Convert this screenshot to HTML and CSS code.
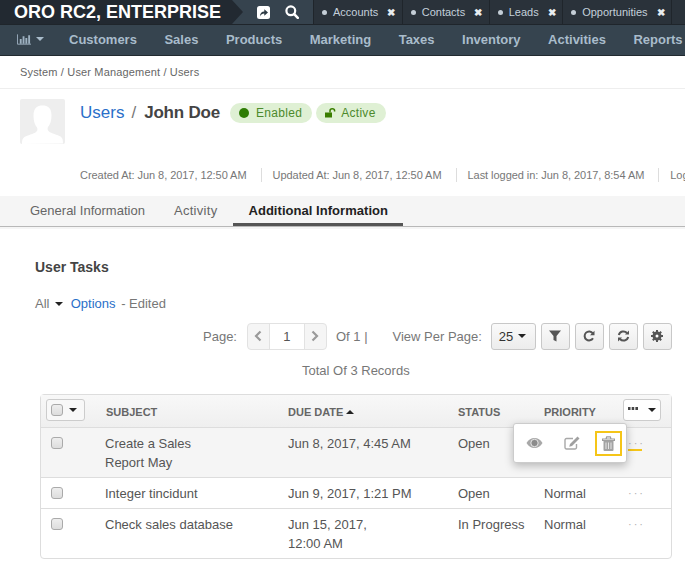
FILE: index.html
```html
<!DOCTYPE html>
<html lang="en">
<head>
<meta charset="utf-8">
<title>Users - John Doe</title>
<link rel="stylesheet" href="styles.css">
</head>
<body>
<div class="page">
  <header class="topbar">
    <div class="brand">ORO RC2, ENTERPRISE</div>
    <div class="top-actions">
      <svg viewBox="0 0 13 13" width="13" height="13"><rect width="13" height="13" rx="2.500" fill="#fff"/><path d="M3 10.500c0-3.500 1.800-5 4.300-5V3.200L11 6.400 7.300 9.800V7.500c-1.900 0-3.200.8-4.300 3z" fill="#2d3a44"/></svg>
      <svg viewBox="0 0 14 14" width="14" height="14"><circle cx="5.800" cy="5.800" r="4.400" fill="none" stroke="#fff" stroke-width="2.200"/><path d="M9.200 9.200l3.600 3.600" stroke="#fff" stroke-width="2.600" stroke-linecap="round"/></svg>
    </div>
    <div class="pin"><i></i><span>Accounts</span><b>✖</b></div>
    <div class="pin"><i></i><span>Contacts</span><b>✖</b></div>
    <div class="pin"><i></i><span>Leads</span><b>✖</b></div>
    <div class="pin"><i></i><span>Opportunities</span><b>✖</b></div>
  </header>
  <nav class="mainnav">
    <div class="nav-chart">
      <svg viewBox="0 0 15 11" width="15" height="11"><path d="M0.500 0v10.500H15" fill="none" stroke="#9fb2c2" stroke-width="1"/><path d="M3 5h2v5H3zM6 2h2v8H6zM9 4h2v6H9zM12 1h2v9h-2z" fill="#9fb2c2"/></svg>
      <span class="caret light"></span>
    </div>
    <a>Customers</a><a>Sales</a><a>Products</a><a>Marketing</a><a>Taxes</a><a>Inventory</a><a>Activities</a><a>Reports</a>
  </nav>
  <div class="crumbs">System / User Management / Users</div>
  <section class="head">
    <div class="avatar">
      <svg viewBox="0 0 45 45" width="45" height="45"><rect width="45" height="45" rx="2" fill="#eeeeee"/><path d="M2 45c0-4 .5-6 3.500-7.500 4-2 10-3 11.500-5.500.5-1 .5-2.500 0-3.500-2-2.500-3.500-6-3.500-11.500C13.500 9 17 6.500 22.500 6.500S31.500 9 31.500 16.500c0 5.500-1.500 9-3.500 11.500-.5 1-.5 2.500 0 3.500 1.500 2.500 7.500 3.500 11.500 5.500 3 1.500 3.500 3.500 3.500 7.500z" fill="#fff"/></svg>
    </div>
    <div class="title">
      <a class="t-link">Users</a><span class="t-sep">/</span><strong>John Doe</strong>
      <span class="pill enabled"><i></i>Enabled</span>
      <span class="pill active">
        <svg viewBox="0 0 13 10" width="13" height="10"><path d="M1 4.500h7v5H1z" fill="#3a7d00"/><path d="M6 4.500V2.800C6 1.500 7 .8 8.300.8s2.300.8 2.300 2v.8" fill="none" stroke="#3a7d00" stroke-width="1.500"/></svg>Active</span>
    </div>
  </section>
  <div class="meta">
    <span>Created At: Jun 8, 2017, 12:50 AM</span>
    <span>Updated At: Jun 8, 2017, 12:50 AM</span>
    <span>Last logged in: Jun 8, 2017, 8:54 AM</span>
    <span>Login Count: 2</span>
  </div>
  <div class="tabs">
    <a>General Information</a><a class="mid">Activity</a><a class="on">Additional Information</a>
  </div>
  <h2 class="sect">User Tasks</h2>
  <div class="views">All <span class="caret"></span> <a>Options</a> <span class="edited">- Edited</span></div>
  <div class="toolbar">
    <span class="lbl">Page:</span>
    <div class="pager">
      <span class="pg-btn"><svg viewBox="0 0 8 12" width="8" height="12"><path d="M6.500 1.500L2 6l4.500 4.500" fill="none" stroke="#9a9a9a" stroke-width="2.200"/></svg></span>
      <span class="pg-num">1</span>
      <span class="pg-btn"><svg viewBox="0 0 8 12" width="8" height="12"><path d="M1.500 1.500L6 6l-4.500 4.500" fill="none" stroke="#9a9a9a" stroke-width="2.200"/></svg></span>
    </div>
    <span class="lbl of">Of 1 |</span>
    <span class="lbl vpp">View Per Page:</span>
    <span class="btn per">25 <span class="caret"></span></span>
    <span class="btn"><svg viewBox="0 0 12 12" width="12" height="12"><path d="M0 .5h12L7.500 6v5.500l-3-1.500V6z" fill="#555"/></svg></span>
    <span class="btn"><svg viewBox="0 0 12 12" width="12" height="12"><path d="M10 8.200A4.500 4.500 0 1 1 9.800 3.300" fill="none" stroke="#555" stroke-width="2"/><path d="M11.500 .8v4.500H7z" fill="#555"/></svg></span>
    <span class="btn"><svg viewBox="0 0 13 12" width="13" height="12"><path d="M1.800 5A4.800 4.800 0 0 1 10 3M11.200 7A4.800 4.800 0 0 1 3 9" fill="none" stroke="#555" stroke-width="2"/><path d="M12 .5v4H8zM1 11.500v-4h4z" fill="#555"/></svg></span>
    <span class="btn"><svg viewBox="0 0 12 12" width="12" height="12"><circle cx="6" cy="6" r="3.200" fill="none" stroke="#555" stroke-width="2.600"/><path d="M6 0v12M0 6h12M1.800 1.800l8.400 8.400M10.200 1.800l-8.400 8.400" stroke="#555" stroke-width="2"/><circle cx="6" cy="6" r="1.500" fill="#fff"/></svg></span>
  </div>
  <div class="total">Total Of 3 Records</div>
  <div class="grid-wrap">
    <table class="grid">
      <thead>
        <tr>
          <th class="c-check"><span class="sel"><span class="cb"></span><span class="caret"></span></span></th>
          <th class="c-subj">SUBJECT</th>
          <th class="c-date">DUE DATE <span class="caret up"></span></th>
          <th class="c-stat">STATUS</th>
          <th class="c-prio">PRIORITY</th>
          <th class="c-act"><span class="more"><svg viewBox="0 0 10 3" width="10" height="3"><path d="M0 0h2.500v3H0zM3.700 0h2.500v3H3.700zM7.400 0H10v3H7.400z" fill="#444"/></svg><span class="caret"></span></span></th>
        </tr>
      </thead>
      <tbody>
        <tr class="hover">
          <td class="c-check"><span class="cb"></span></td>
          <td>Create a Sales<br>Report May</td>
          <td>Jun 8, 2017, 4:45 AM</td>
          <td>Open</td>
          <td></td>
          <td class="c-act"><span class="dots lined">···</span></td>
        </tr>
        <tr>
          <td class="c-check"><span class="cb"></span></td>
          <td>Integer tincidunt</td>
          <td>Jun 9, 2017, 1:21 PM</td>
          <td>Open</td>
          <td>Normal</td>
          <td class="c-act"><span class="dots">···</span></td>
        </tr>
        <tr>
          <td class="c-check"><span class="cb"></span></td>
          <td>Check sales database</td>
          <td>Jun 15, 2017,<br>12:00 AM</td>
          <td>In Progress</td>
          <td>Normal</td>
          <td class="c-act"><span class="dots">···</span></td>
        </tr>
      </tbody>
    </table>
    <div class="popover">
      <svg viewBox="0 0 17 12" width="17" height="12"><path d="M.5 6C2.500 2.500 5.200 1 8.500 1s6 1.500 8 5c-2 3.500-4.700 5-8 5s-6-1.500-8-5z" fill="#a8a8a8"/><circle cx="8.500" cy="6" r="3.700" fill="#8b8b8b" stroke="#e8e8e8" stroke-width="1"/></svg>
      <svg viewBox="0 0 17 14" width="17" height="14"><path d="M12.500 8v3.500a1.500 1.500 0 0 1-1.500 1.500H2.500A1.500 1.500 0 0 1 1 11.500V4a1.500 1.500 0 0 1 1.500-1.500H9" fill="none" stroke="#a8a8a8" stroke-width="1.400"/><path d="M6 8l-.8 2.800L8 10l7.500-7.500-2-2z" fill="#a0a0a0"/></svg>
      <span class="del"><svg viewBox="0 0 13 15" width="13" height="15"><path d="M0.500 3h12v1.500H0.500zM4 3l.7-2.200h3.600L9 3" fill="none" stroke="#9c9c9c" stroke-width="1.200"/><path d="M1.500 4.500h10v9.500a1 1 0 0 1-1 1h-8a1 1 0 0 1-1-1z" fill="#a3a3a3"/><path d="M4 6.500v6.500M6.500 6.500v6.500M9 6.500v6.500" stroke="#e6e6e6" stroke-width="1"/></svg></span>
    </div>
  </div>
</div>
</body>
</html>
```
FILE: styles.css
```css
* { box-sizing: border-box; }
html, body { margin: 0; padding: 0; background: #fff; }
body { font-family: "Liberation Sans", Arial, sans-serif; color: #555; overflow: hidden; }
.page { width: 685px; height: 577px; overflow: hidden; position: relative; font-size: 14px; }

.topbar { height: 25px; background: #2a323a; display: flex; align-items: stretch; border-bottom: 1px solid #1f252b; white-space: nowrap; }
.brand { width: 232px; flex: none; padding-left: 14px; font-size: 18px; font-weight: 700; line-height: 24px; color: #fff; background: #222931; position: relative; }
.brand::after { content: ""; position: absolute; left: 100%; top: 0; border-left: 11px solid #222931; border-top: 12px solid transparent; border-bottom: 12px solid transparent; }
.top-actions { width: 82px; flex: none; background: #36434e; display: flex; align-items: center; gap: 15px; padding-left: 25px; border-right: 1px solid #1f252b; }
.pin { display: flex; align-items: center; height: 24px; padding: 0 6.500px 0 8px; color: #c4d0da; font-size: 11px; border-right: 1px solid #1f252b; flex: none; }
.pin i { width: 5px; height: 5px; border-radius: 50%; background: #c4ced6; margin-right: 6px; flex: none; }
.pin b { font-size: 10px; color: #e8edf0; margin-left: 9px; font-weight: 700; }

.mainnav { height: 31px; background: #36444f; border-bottom: 1px solid #222a30; display: flex; align-items: center; color: #a9bccb; font-size: 13px; font-weight: 700; white-space: nowrap; padding: 0 0 2px 17px; }
.mainnav a { margin-left: 27.500px; flex: none; }
.nav-chart { display: flex; align-items: center; gap: 5px; width: 27px; flex: none; }
.nav-chart + a { margin-left: 25px; }
.caret { display: inline-block; width: 0; height: 0; border-left: 4px solid transparent; border-right: 4px solid transparent; border-top: 4px solid #222; vertical-align: 2px; flex: none; }
.caret.light { border-top-color: #a9bccb; }
.caret.up { border-top: 0; border-bottom: 4px solid #222; }

.crumbs { height: 33px; border-bottom: 1px solid #eee; padding: 10px 0 0 20px; font-size: 11px; line-height: 13px; letter-spacing: .16px; color: #666; }

.head { display: flex; padding: 10px 0 0 20px; height: 78px; }
.avatar { width: 45px; height: 45px; flex: none; }
.title { margin: 1px 0 0 15px; display: flex; align-items: center; height: 26px; font-size: 17px; white-space: nowrap; }
.t-link { color: #2a6fc9; }
.t-sep { margin: 0 8px 0 7px; color: #777; }
.title strong { color: #444; font-size: 17px; letter-spacing: -.2px; }
.pill { display: inline-flex; align-items: center; height: 20px; border-radius: 10px; background: #dff0d4; color: #4c8a2c; font-size: 12px; letter-spacing: .3px; padding: 0 10px 0 9px; }
.pill.enabled { margin-left: 10px; }
.pill.enabled i { width: 10px; height: 10px; border-radius: 50%; background: #2f7d05; margin-right: 7px; }
.pill.active { margin-left: 4px; padding-left: 8px; }
.pill.active svg { margin-right: 4px; }

.meta { display: flex; padding-left: 80px; font-size: 11px; line-height: 14px; letter-spacing: -.05px; color: #777; white-space: nowrap; height: 28px; margin-top: 1px; }
.meta span { padding-right: 14px; margin-right: 11px; height: 14px; border-right: 1px solid #ddd; flex: none; }

.tabs { height: 31px; background: #f5f5f5; border-bottom: 1px solid #b8b8b8; display: flex; padding-left: 30px; font-size: 13px; box-shadow: 0 2px 0 #f5f5f5; }
.tabs a { padding-top: 7px; color: #666; height: 30px; line-height: 16px; }
.tabs a.mid { margin-left: 29px; margin-right: 16px; letter-spacing: .3px; }
.tabs a.on { color: #222; font-weight: 700; padding: 7px 15px 0; border-bottom: 3px solid #555; letter-spacing: .04px; }

.sect { margin: 32px 0 0 35px; font-size: 14px; line-height: 16px; font-weight: 700; color: #444; }
.views { margin: 21px 0 0 35px; line-height: 16px; font-size: 13px; color: #777; }
.views a { color: #2a6fc9; margin-left: 4px; }
.views .caret { margin-left: 2px; }
.views .edited { margin-left: 2px; }

.toolbar { display: flex; align-items: center; margin-top: 10px; height: 28px; padding-left: 203px; font-size: 13px; color: #777; white-space: nowrap; }
.pager { display: flex; height: 27px; margin-left: 10px; border: 1px solid #e2e2e2; border-radius: 4px; background: #f5f5f5; }
.pg-btn { width: 21px; display: flex; align-items: center; justify-content: center; }
.pg-num { width: 36px; background: #fff; text-align: center; line-height: 25px; color: #555; border-left: 1px solid #e2e2e2; border-right: 1px solid #e2e2e2; }
.of { margin-left: 9px; }
.vpp { margin-left: 25px; }
.btn { display: flex; align-items: center; justify-content: center; height: 27px; width: 29px; margin-left: 5px; border: 1px solid #c8c8c8; border-radius: 3px; background: linear-gradient(#fafafa, #ececec); color: #333; font-size: 13px; }
.btn.per { width: 45px; margin-left: 9px; gap: 5px; padding-right: 2px; }

.total { padding-left: 302px; margin-top: 13px; font-size: 13px; line-height: 15px; color: #777; }

.grid-wrap { position: relative; margin: 16px 13px 0 40px; }
.grid { width: 100%; border-collapse: separate; border-spacing: 0; table-layout: fixed; border: 1px solid #ddd; border-radius: 4px; font-size: 13px; color: #555; }
.grid th { height: 33px; background: linear-gradient(#f8f8f8, #efefef); border-bottom: 1px solid #ddd; text-align: left; font-size: 11px; font-weight: 700; color: #666; padding: 2px 0 0; }
.grid td { padding: 6px 0 5px; line-height: 19px; vertical-align: top; border-bottom: 1px solid #ddd; }
.grid tr:last-child td { border-bottom: 0; }
.grid tr.hover td { background: #f5f5f5; }
.grid thead th:nth-child(1) { width: 64px; }
.grid thead th:nth-child(2) { width: 183px; }
.grid thead th:nth-child(3) { width: 170px; }
.grid thead th:nth-child(4) { width: 86px; }
.grid thead th:nth-child(5) { width: 79px; }
.grid th.c-subj { padding-left: 1px; }
.grid td.c-check { padding-left: 10px; }
.grid th.c-check { padding: 0 0 2px 5px; }
.grid th.c-act { padding: 0 0 2px; }
.cb { display: inline-block; width: 12px; height: 12px; border: 1px solid #aaa; border-radius: 3px; background: linear-gradient(#eee, #ddd); }
.grid td .cb { display: block; margin-top: 3px; }
.sel { display: inline-flex; align-items: center; justify-content: space-between; width: 39px; height: 22px; padding: 0 7px 0 4px; border: 1px solid #ccc; border-radius: 3px; background: #f8f8f8; vertical-align: middle; }
.more { display: inline-flex; align-items: center; justify-content: space-between; width: 38px; height: 22px; padding: 0 4px; border: 1px solid #ccc; border-radius: 3px; background: #fff; vertical-align: middle; }
.more svg { margin-bottom: 3px; }
.dots { color: #b0b0b0; letter-spacing: 2px; display: inline-block; margin-left: 5px; font-size: 11px; position: relative; vertical-align: top; }
.dots.lined::after { content: ""; position: absolute; left: 0; top: 15px; width: 14px; height: 2px; background: #f5c518; }
.popover { position: absolute; left: 473px; top: 29px; width: 114px; height: 40px; background: #fff; border: 1px solid #ccc; border-radius: 3px; box-shadow: 0 3px 9px rgba(0,0,0,.25); display: flex; align-items: center; padding-left: 12px; gap: 21px; }
.del { display: flex; align-items: center; justify-content: center; width: 27px; height: 25px; border: 2px solid #f5c518; margin-left: -7px; }
```
